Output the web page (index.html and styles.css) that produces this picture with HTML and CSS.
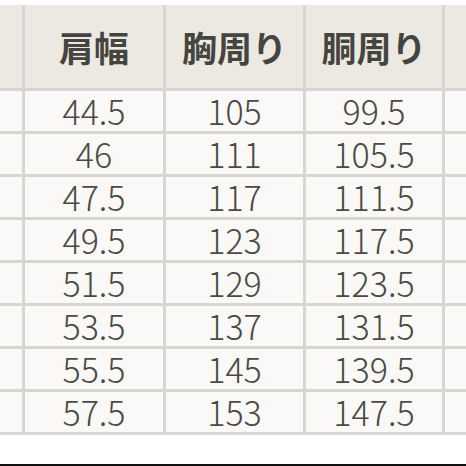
FILE: index.html
```html
<!DOCTYPE html>
<html lang="ja">
<head>
<meta charset="utf-8">
<link rel="stylesheet" href="styles.css">
</head>
<body>
<div class="page">
  <div class="table">
    <div class="cell head edge"></div>
    <div class="cell head">肩幅</div>
    <div class="cell head">胸周り</div>
    <div class="cell head">胴周り</div>
    <div class="cell head edge"></div>

    <div class="cell edge"></div><div class="cell">44.5</div><div class="cell">105</div><div class="cell">99.5</div><div class="cell edge"></div>
    <div class="cell edge"></div><div class="cell">46</div><div class="cell">111</div><div class="cell">105.5</div><div class="cell edge"></div>
    <div class="cell edge"></div><div class="cell">47.5</div><div class="cell">117</div><div class="cell">111.5</div><div class="cell edge"></div>
    <div class="cell edge"></div><div class="cell">49.5</div><div class="cell">123</div><div class="cell">117.5</div><div class="cell edge"></div>
    <div class="cell edge"></div><div class="cell">51.5</div><div class="cell">129</div><div class="cell">123.5</div><div class="cell edge"></div>
    <div class="cell edge"></div><div class="cell">53.5</div><div class="cell">137</div><div class="cell">131.5</div><div class="cell edge"></div>
    <div class="cell edge"></div><div class="cell">55.5</div><div class="cell">145</div><div class="cell">139.5</div><div class="cell edge"></div>
    <div class="cell edge"></div><div class="cell">57.5</div><div class="cell">153</div><div class="cell">147.5</div><div class="cell edge"></div>
  </div>
  <div class="bottom-bar"></div>
</div>
</body>
</html>
```
FILE: styles.css
```css
html, body {
  margin: 0;
  padding: 0;
  background: #ffffff;
}
.page {
  width: 466px;
  height: 466px;
  display: flex;
  flex-direction: column;
  overflow: hidden;
  padding-top: 5px;
  box-sizing: border-box;
}
.table {
  display: grid;
  grid-template-columns: 22px 138px 137px 136px 1fr;
  grid-template-rows: 83px repeat(8, 40px);
  gap: 3px;
  background: #d8d6d1;
  border-bottom: 3px solid #d8d6d1;
  font-family: "Noto Sans CJK JP", "Noto Sans", sans-serif;
}
.cell {
  background: #faf9f7;
  display: flex;
  align-items: center;
  justify-content: center;
  color: #4b4944;
  font-size: 34px;
  font-weight: 300;
  line-height: 1;
}
.head {
  background: #ebe9e2;
  font-weight: 700;
  font-size: 35px;
  color: #46443f;
}
.bottom-bar {
  margin-top: auto;
  height: 2px;
  background: #111111;
}
```
